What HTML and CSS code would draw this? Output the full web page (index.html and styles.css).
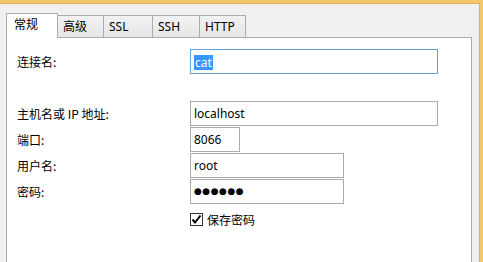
FILE: index.html
```html
<!DOCTYPE html>
<html>
<head>
    <title>连接属性</title>
    <link rel="stylesheet" href="styles.css">
</head>
<body>
    <div class="frame">
        <div class="window">
            <!-- Tabs -->
            <div class="tabs">
                <div class="tab active">常规</div>
                <div class="tab w47">高级</div>
                <div class="tab w50">SSL</div>
                <div class="tab w48">SSH</div>
                <div class="tab w47">HTTP</div>
            </div>

            <!-- General page -->
            <div class="panel">
                <div class="form">
                    <div class="label">连接名:</div>
                    <div class="field wide focused"><span class="sel">cat</span></div>
                </div>

                <div class="form group">
                    <div class="label">主机名或 IP 地址:</div>
                    <div class="field wide">localhost</div>

                    <div class="label">端口:</div>
                    <div class="field port">8066</div>

                    <div class="label">用户名:</div>
                    <div class="field mid">root</div>

                    <div class="label">密码:</div>
                    <div class="field mid dots">●●●●●●</div>

                    <div class="check-row">
                        <span class="checkbox">
                            <svg width="11" height="11" viewBox="0 0 11 11">
                                <path d="M1.5 5.5 L4 8.5 L9.5 1.5" fill="none" stroke="#000" stroke-width="2"/>
                            </svg>
                        </span>
                        <span class="check-label">保存密码</span>
                    </div>
                </div>
            </div>
        </div>
    </div>
</body>
</html>
```

FILE: styles.css
```css
body {
    margin: 0;
    overflow: hidden;
    background-color: #f0f0f0;
    font-family: "Noto Sans", "Noto Sans CJK SC", sans-serif;
    font-size: 12px;
    color: #000;
}

.frame {
    height: 262px;
    box-sizing: border-box;
    border-top: 3px solid #f3c86d;
    border-right: 3px solid #f3c86d;
}

.window {
    height: 100%;
    box-sizing: border-box;
    border-top: 1px solid #ddb05a;
    border-right: 1px solid #ddb05a;
    padding-top: 9px;
}

.tabs {
    display: flex;
    align-items: flex-end;
    padding-left: 6px;
}

.tab {
    height: 22px;
    box-sizing: border-box;
    border: 1px solid #acacac;
    border-bottom: none;
    background: linear-gradient(#f2f2f2, #e6e6e6);
    padding: 3px 0 0 5px;
    margin-left: -1px;
    line-height: 16px;
    white-space: nowrap;
}

.tab.active {
    width: 52px;
    height: 25px;
    margin-left: 0;
    margin-bottom: -1px;
    padding-left: 7px;
    background: #fff;
    position: relative;
    z-index: 1;
}

.w47 { width: 47px; }
.w48 { width: 48px; }
.w50 { width: 50px; }

.panel {
    height: 225px;
    box-sizing: border-box;
    margin: 0 7px 0 6px;
    border: 1px solid #acacac;
    border-bottom: none;
    background-color: #fff;
    padding-top: 11px;
}

.form {
    display: grid;
    grid-template-columns: 173px auto;
    grid-auto-rows: 25px;
    row-gap: 1px;
    padding-left: 10px;
    align-items: center;
}

.group {
    margin-top: 27px;
}

.label {
    font-family: "Noto Sans CJK SC", sans-serif;
    line-height: 16px;
}

.field {
    height: 25px;
    box-sizing: border-box;
    border: 1px solid #ababab;
    padding-left: 3px;
    line-height: 23px;
    background-color: #fff;
    white-space: nowrap;
    overflow: hidden;
}

.field.focused {
    border-color: #659fd8;
}

.wide { width: 248px; }
.port { width: 50px; }
.mid { width: 154px; }

.sel {
    display: inline-block;
    line-height: 15px;
    padding: 0 1px;
    background-color: #3399ff;
    color: #fff;
    vertical-align: middle;
}

.dots {
    font-family: "DejaVu Sans", sans-serif;
    font-size: 9px;
    letter-spacing: 0.5px;
}

.check-row {
    grid-column: 2;
    display: flex;
    align-items: center;
    gap: 4px;
    margin-top: 8px;
    height: 13px;
    align-self: start;
}

.checkbox {
    width: 13px;
    height: 13px;
    box-sizing: border-box;
    border: 1px solid #333;
    background-color: #fff;
    display: flex;
    align-items: center;
    justify-content: center;
}

.check-label {
    font-family: "Noto Sans CJK SC", sans-serif;
    line-height: 16px;
}
```
